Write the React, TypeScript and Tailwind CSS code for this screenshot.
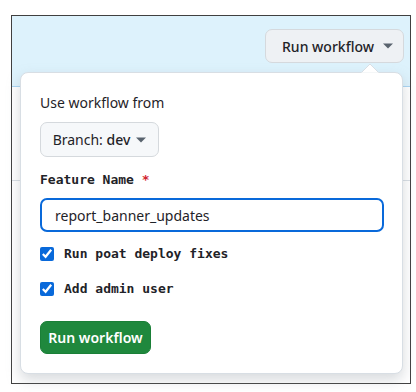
import React from "react";

function Caret({ className = "" }: { className?: string }) {
  return (
    <svg width="10" height="6" viewBox="0 0 10 6" className={className}>
      <path d="M0 0.5 L10 0.5 L5 5.5 Z" fill="currentColor" />
    </svg>
  );
}

export default function App() {
  return (
    <div
      className="w-[416px] h-[392px] bg-white pt-[15px] pl-[11px]"
      style={{ fontFamily: '"Noto Sans", "Segoe UI", sans-serif' }}
    >
      <div className="relative w-[400px] h-[369px] border border-[#404040] bg-white">
        {/* header */}
        <div className="h-[71px] bg-[#ddf2fc] border-b border-[#a8d4f3] flex justify-end items-start pt-[13px] pr-[6px]">
          <button className="h-[34px] w-[139px] rounded-[7px] border border-[#d5d9dd] bg-[#eef1f4] flex items-center pl-[16px] gap-[9px] text-[14px] font-medium text-[#1f2328]">
            <span>Run workflow</span>
            <Caret className="text-[#59636e]" />
          </button>
        </div>
        <div className="h-[94px] border-b border-[#d8dee4]" />

        {/* popover */}
        <div className="absolute left-[8px] top-[56px] w-[383px] h-[302px] rounded-[8px] border border-[#d8dee4] bg-white shadow-[0_6px_14px_rgba(140,149,159,0.35)] px-[19px] pt-[19px]">
          <svg
            width="18"
            height="10"
            viewBox="0 0 18 10"
            className="absolute right-[23px] top-[-10px]"
          >
            <path d="M0 10 L9 1 L18 10 Z" fill="#ffffff" stroke="#d8dee4" strokeWidth="1" />
            <path d="M0.5 10.5 L17.5 10.5" stroke="#ffffff" strokeWidth="2" />
          </svg>
          <div className="text-[14px] leading-[22px] text-[#1f2328]">Use workflow from</div>
          <button className="mt-[8px] h-[35px] w-[119px] rounded-[7px] border border-[#d5d9dd] bg-[#f6f8fa] flex items-center justify-center gap-[6px] text-[14px] text-[#1f2328]">
            <span>
              Branch: <span className="font-medium">dev</span>
            </span>
            <Caret className="text-[#59636e]" />
          </button>
          <div
            className="mt-[13px] text-[13px] leading-[20px] font-bold text-[#1f2328]"
            style={{ fontFamily: '"DejaVu Sans Mono", monospace' }}
          >
            Feature Name <span className="text-[#d1242f]">*</span>
          </div>
          <div className="mt-[8px] h-[34px] w-[344px] rounded-[7px] border-2 border-[#0969da] flex items-center pl-[13px] text-[14px] text-[#1f2328]">
            report_banner_updates
          </div>
          <label
            className="mt-[12px] flex items-center gap-[10px] text-[13px] font-bold text-[#1f2328] h-[20px]"
            style={{ fontFamily: '"DejaVu Sans Mono", monospace' }}
          >
            <input
              type="checkbox"
              defaultChecked
              className="m-0 w-[14px] h-[14px] accent-[#0969da]"
            />
            Run poat deploy fixes
          </label>
          <label
            className="mt-[15px] flex items-center gap-[10px] text-[13px] font-bold text-[#1f2328] h-[20px]"
            style={{ fontFamily: '"DejaVu Sans Mono", monospace' }}
          >
            <input
              type="checkbox"
              defaultChecked
              className="m-0 w-[14px] h-[14px] accent-[#0969da]"
            />
            Add admin user
          </label>
          <button className="mt-[22px] h-[33px] w-[111px] rounded-[7px] bg-[#1f883d] border border-[#1a7f37] text-white text-[14px] font-semibold flex items-center justify-center">
            Run workflow
          </button>
        </div>
      </div>
    </div>
  );
}
